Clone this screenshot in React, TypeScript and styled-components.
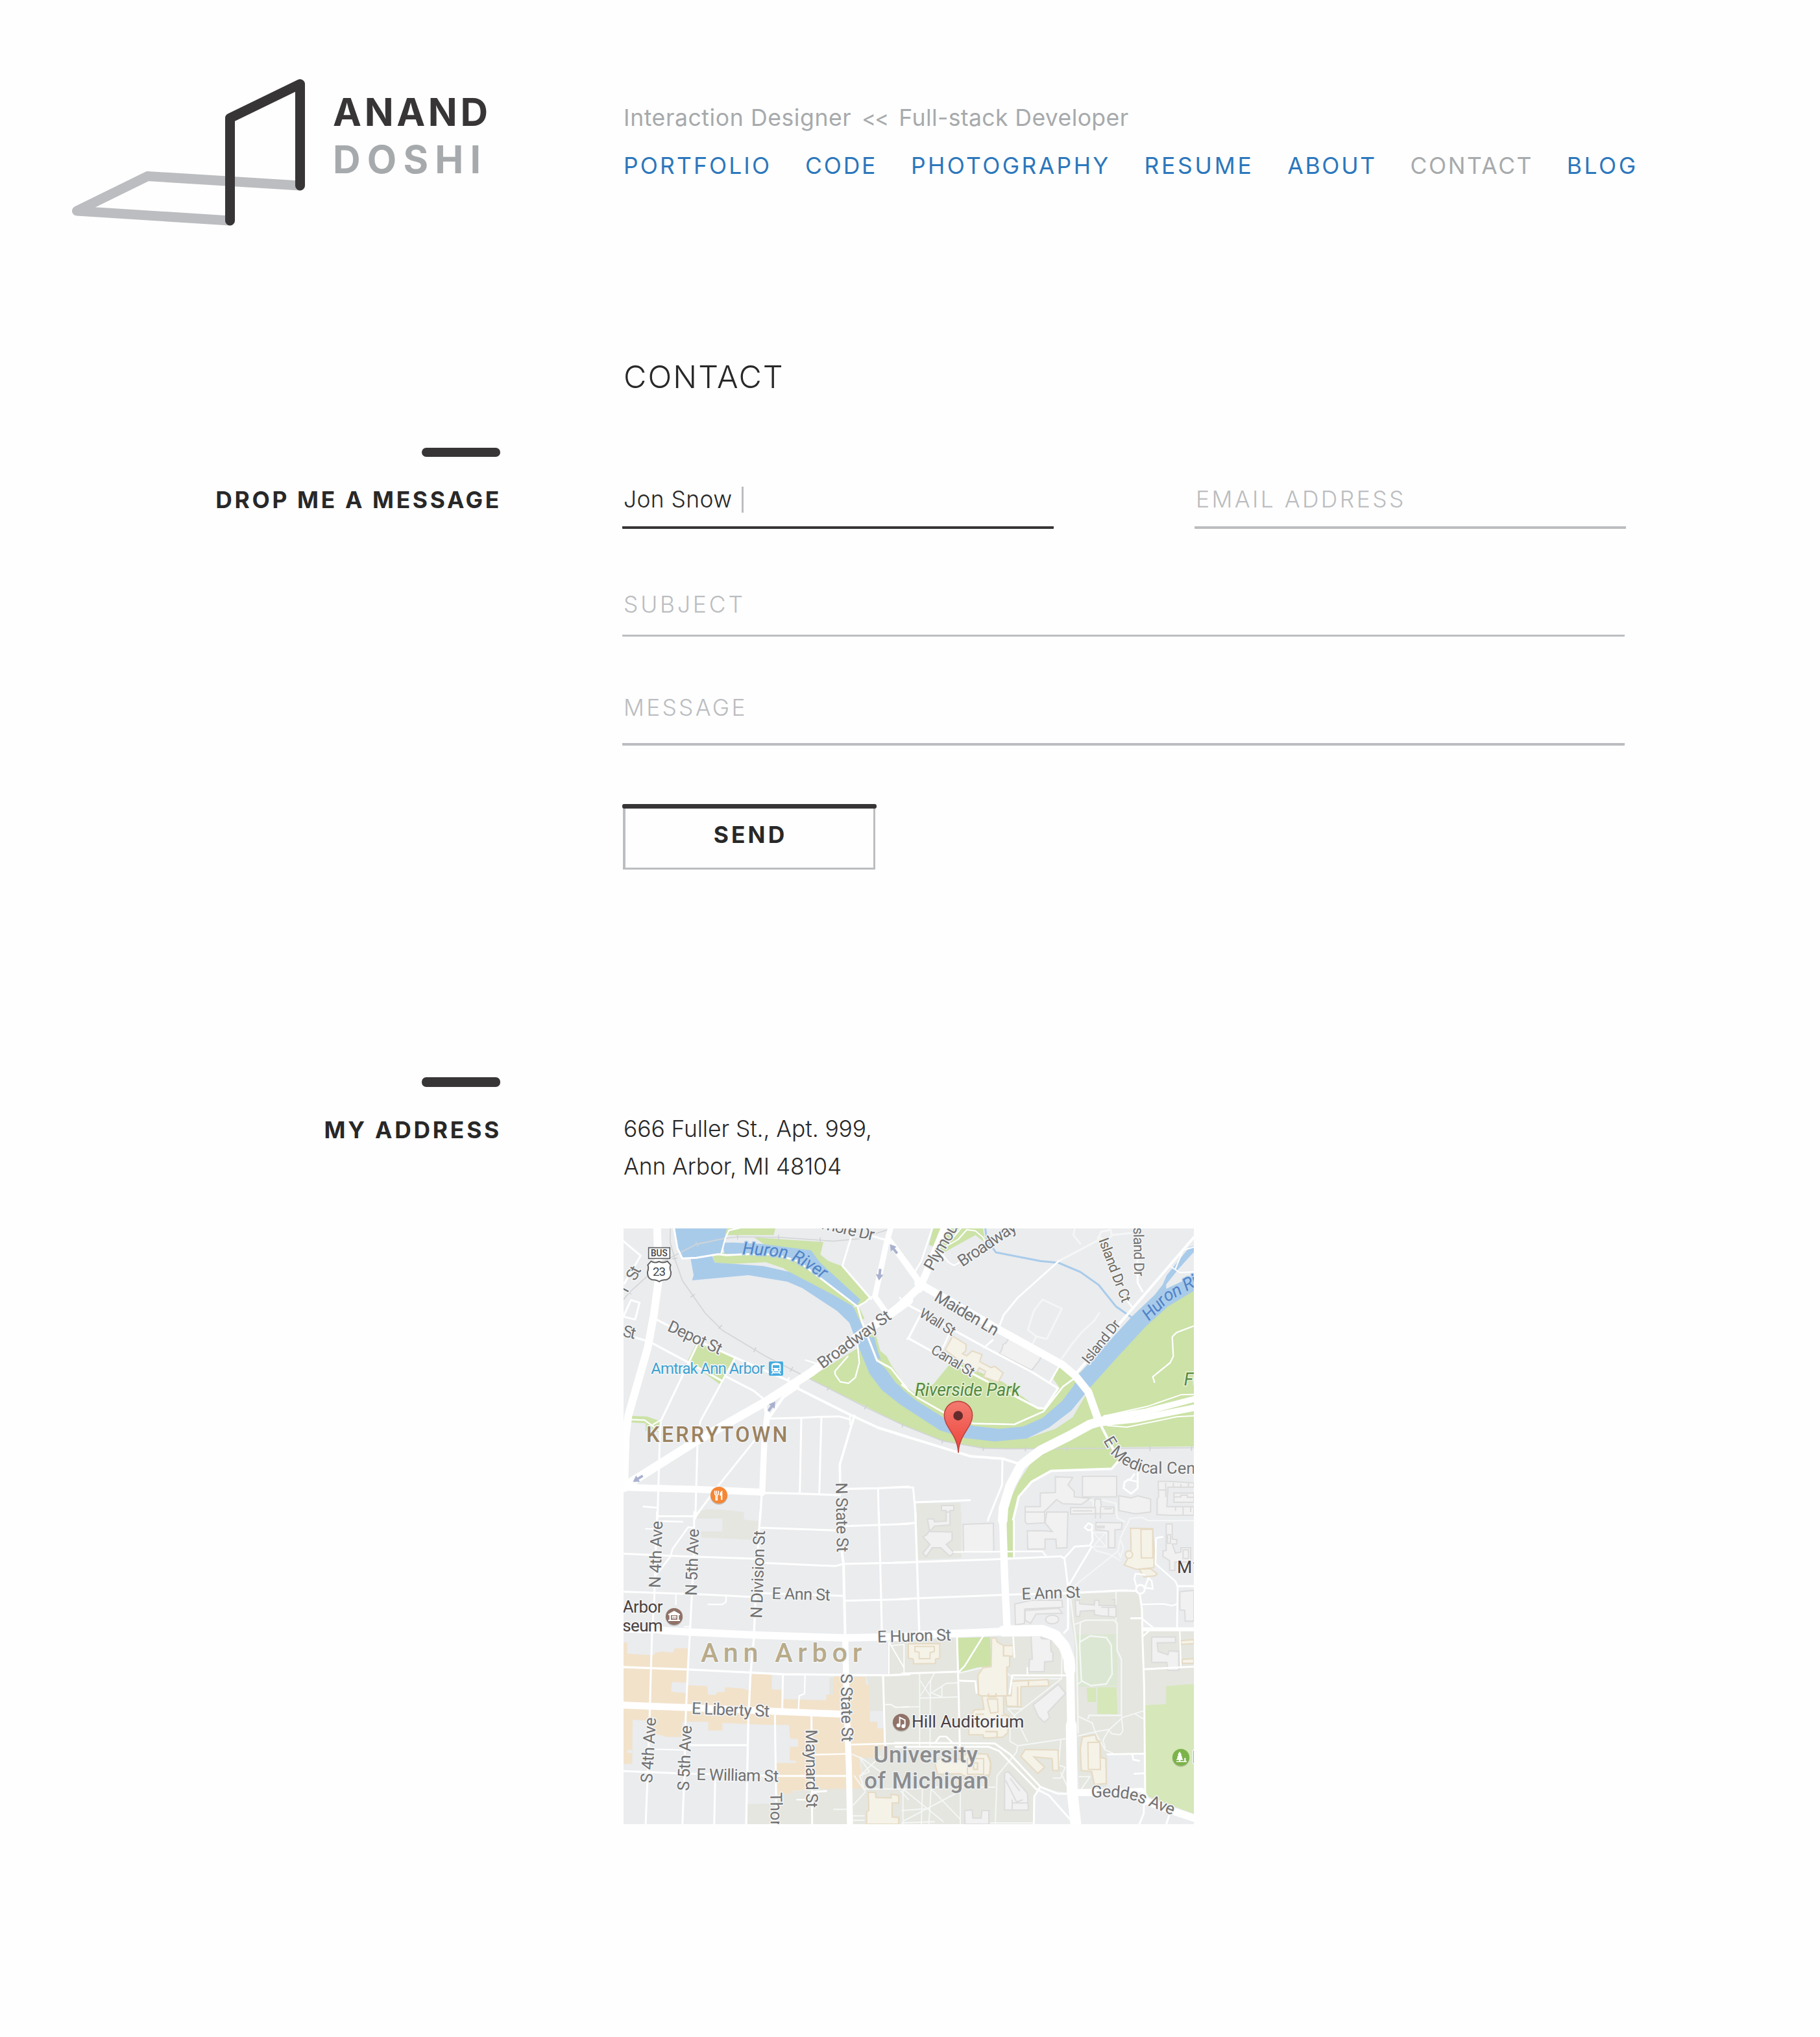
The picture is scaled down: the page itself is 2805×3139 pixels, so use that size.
import React from "react";
import styled, { createGlobalStyle } from "styled-components";

const ink = "#282828";
const dark = "#383536";
const rule = "#bbbdc0";
const muted = "#a7aaac";
const link = "#2c77bc";

const GlobalStyle = createGlobalStyle`
  html, body { margin: 0; padding: 0; background: #fefefe; }
  * { box-sizing: border-box; }
`;

const Page = styled.div`
  min-height: 3139px;
  padding-top: 100px;
  background: #fefefe;
  color: ${ink};
  font-family: Inter, "Open Sans", sans-serif;
  font-size: 35.4px;
  line-height: 40px;
  white-space: nowrap;
`;

const Columns = styled.div`
  display: grid;
  grid-template-columns: 771px 1fr;
  column-gap: 190px;
`;

const Header = styled.header`
  display: grid;
  grid-template-columns: 961px 1fr;
  height: 260px;
`;

const Brand = styled.div`
  display: flex;
  gap: 28px;
  padding-left: 100px;
`;

const LogoMark = styled.svg`
  display: block;
  width: 385px;
  height: 260px;
`;

const BrandName = styled.div`
  display: flex;
  flex-direction: column;
  padding-top: 36px;
  font-size: 59px;
  font-weight: 650;
  line-height: 73px;
`;

const NamePart = styled.span<{ $color: string; $track: number }>`
  color: ${(p) => p.$color};
  letter-spacing: ${(p) => p.$track}px;
`;

const HeaderText = styled.div`
  padding-top: 45px;
  line-height: 74px;
`;

const Tagline = styled.div`
  display: flex;
  gap: 16px;
  color: ${muted};
  font-size: 35.6px;
`;

const Role = styled.span<{ $track: number }>`
  letter-spacing: ${(p) => p.$track}px;
`;

const Chevrons = styled.span`
  width: 41px;
  font-size: 33px;
  letter-spacing: -2px;
`;

const Nav = styled.nav`
  display: flex;
  gap: 51.7px;
`;

const NavLink = styled.a<{ $track: number; $current?: boolean }>`
  color: ${(p) => (p.$current ? muted : link)};
  letter-spacing: ${(p) => p.$track}px;
  text-decoration: none;
`;

const Title = styled.h1`
  margin: 191px 0 79px 961px;
  font-size: 48.5px;
  font-weight: 350;
  line-height: 60px;
  letter-spacing: 2.1px;
`;

const Aside = styled.aside`
  display: flex;
  flex-direction: column;
  align-items: flex-end;
  gap: 47px;
`;

const Dash = styled.div<{ $height: number }>`
  width: 121px;
  height: ${(p) => p.$height}px;
  border-radius: 7px;
  background: ${dark};
`;

const AsideTitle = styled.h2<{ $track: number }>`
  margin: 0 -2px 0 0;
  font-size: 35.4px;
  font-weight: 700;
  letter-spacing: ${(p) => p.$track}px;
`;

const Form = styled.div`
  width: 1547px;
  margin-left: -2px;
  padding-top: 60px;
`;

const FieldRow = styled.div`
  display: grid;
  grid-template-columns: 665px 665px;
  column-gap: 217px;
`;

const Field = styled.label<{ $top?: number; $bottom: number; $line: number; $active?: boolean; $track: number }>`
  display: flex;
  align-items: center;
  width: ${(p) => (p.$top ? 1545 : 665)}px;
  margin-top: ${(p) => p.$top ?? 0}px;
  padding: 0 0 ${(p) => p.$bottom}px 2px;
  border-bottom: ${(p) => p.$line}px solid ${(p) => (p.$active ? dark : rule)};
  border-radius: 1px;
  color: ${(p) => (p.$active ? ink : rule)};
  font-weight: 350;
  letter-spacing: ${(p) => p.$track}px;
`;

const Caret = styled.span`
  width: 3px;
  height: 40px;
  margin-left: 15px;
  background: ${rule};
`;

const SendButton = styled.button`
  position: relative;
  display: block;
  width: 389px;
  height: 101px;
  margin: 90px 0 0 1px;
  padding: 8px 0 10px 3px;
  border: solid ${rule};
  border-width: 0 3px 3px 4px;
  background: transparent;
  color: ${ink};
  font: 700 35.4px/40px Inter, sans-serif;
  letter-spacing: 4.12px;
  &::before {
    content: "";
    position: absolute;
    top: 0;
    left: -5px;
    right: -5px;
    height: 7px;
    border-radius: 3px;
    background: ${dark};
  }
`;

const AddressSection = styled(Columns)`
  margin-top: 320px;
`;

const Address = styled.address`
  padding-top: 51px;
  font-style: normal;
  font-weight: 350;
  line-height: 58px;
  letter-spacing: -0.1px;
`;

const MapFrame = styled.div`
  width: 879px;
  height: 918px;
  margin-top: 66px;
  overflow: hidden;
  background: #eaecee;
`;

const MapSvg = styled.svg`
  display: block;
  width: 100%;
  height: 100%;
  font-family: Roboto, sans-serif;
`;

const MapText = styled.text<{ $size: number; $color: string; $weight?: number; $italic?: boolean; $halo?: string }>`
  font-size: ${(p) => p.$size}px;
  fill: ${(p) => p.$color};
  font-weight: ${(p) => p.$weight ?? 400};
  font-style: ${(p) => (p.$italic ? "italic" : "normal")};
  stroke: ${(p) => p.$halo ?? "#f3f4f5"};
  stroke-width: 10px;
  stroke-linejoin: round;
  paint-order: stroke;
`;

/* ---------- map data: four tiles, each with its own origin ---------- */

type Tile = "nw" | "ne" | "sw" | "se";
const origin: Record<Tile, string> = {
  nw: "translate(-63 -39)",
  ne: "translate(1287 -39)",
  sw: "translate(-63 1311)",
  se: "translate(1287 1311)",
};
const tiles: Tile[] = ["nw", "ne", "sw", "se"];

const water = "#a9cbea";
const park = "#cce2a7";
const campus = "#e4e6df";
const shops = "#f2e2ca";

type Area = [string, string];
const areas: Record<Tile, Area[]> = {
  nw: [
    [park, "540,39 765,39 757,70 535,70"],
    [park, "667,80 987,102 973,160 1010,190 1070,212 1208,362 1150,402 1100,390"],
    [park, "472,160 530,150 760,150 880,185 1150,390 1110,402 1080,390 940,310 870,268 800,222 720,195 560,203 485,197"],
    [park, "1125,405 1150,400 1177,455 1165,462 1190,530 1225,515 1250,605 1280,630 1300,670 1380,785 1380,960 1355,948 1180,860 1010,778 918,732 1150,590"],
    [park, "400,568 580,635 515,765 360,650"],
    [park, "88,905 170,908 235,930 225,980 165,975 165,940 85,935"],
    [water, "298,39 540,39 530,95 510,158 335,180 322,160 305,110"],
    [water, "520,105 570,104 700,110 930,140 970,195 1158,368 1140,400 1115,380 870,185 760,156 530,156"],
    [water, "373,178 472,165 485,197 600,205 710,213 830,240 1040,350 1125,400 1172,500 1205,540 1220,590 1235,650 1275,688 1320,750 1382,806 1382,884 1258,787 1200,710 1155,600 1128,530 1107,475 1050,420 890,315 820,285 640,255 380,279 387,255"],
    [water, "1205,545 1222,540 1240,610 1253,645 1235,640"],
    [campus, "420,1345 450,1337 530,1340 618,1350 618,1380 400,1380"],
  ],
  ne: [
    [park, "0,755 60,800 145,760 235,650 470,750 630,870 660,872 725,770 700,735 725,675 800,720 830,700 1065,460 1350,325 1350,1047 1000,1050 1000,1110 970,1150 690,1160 600,1210 540,1290 515,1380 480,1380 480,1335 540,1210 640,1057 376,1057 190,1022 0,948"],
    [park, "145,39 125,115 165,130 185,155 340,70 385,105 375,39"],
    ["#eaecee", "235,650 470,750 630,870 655,865 720,775 400,590 250,500"],
    ["#e6eaea", "578,1010 710,965 790,912 870,775 780,880 650,960"],
    [water, "0,780 60,830 190,912 330,952 450,965 560,955 650,915 740,838 795,765 820,710 1065,445 1170,345 1205,300 1225,255 1330,125 1350,120 1350,148 1280,225 1222,298 1222,318 1350,258 1350,328 1230,400 1130,490 1000,630 870,775 785,880 680,960 578,1010 430,1024 290,1008 175,972 0,858"],
    [campus, "68,1310 272,1308 272,1380 68,1380"],
  ],
  sw: [
    [campus, "400,0 620,0 620,35 690,42 690,130 425,118 420,90 520,90 520,25 400,15"],
    [campus, "1285,600 1380,590 1380,1443 635,1443 635,1350 775,1348 775,1300 950,1280 1175,1270 1160,1135 1225,1130 1265,1080 1205,970 1195,797 1185,760 1290,758"],
    [campus, "1015,765 1035,765 1035,843 1015,845"],
    [shops, "63,603 80,603 80,655 200,662 210,650 240,645 290,650 300,630 360,630 360,728 63,717"],
    [shops, "63,718 190,722 360,730 355,800 450,805 455,845 490,845 495,832 530,832 532,810 610,815 645,825 650,750 748,750 748,820 792,822 800,865 1000,870 1000,845 1035,843 1035,760 1183,762 1185,797 1198,797 1203,970 1237,970 1237,1000 1268,1002 1265,1080 1225,1135 1155,1138 1170,1278 950,1280 840,1290 835,1303 775,1305 770,1160 860,1160 860,1150 830,1148 833,1085 870,1085 870,1050 833,1048 828,985 700,983 520,975 520,1010 455,1010 455,970 335,970 330,1040 260,1040 230,1030 190,1025 190,965 105,960 103,1165 63,1165"],
    ["#eaecee", "287,785 355,790 355,838 283,830"],
    ["#eaecee", "1203,920 1265,920 1265,1000 1237,1000 1237,970 1203,970"],
    ["#eaecee", "82,1100 103,1100 101,1116 78,1112"],
  ],
  se: [
    [campus, "0,590 250,580 560,575 700,580 750,650 770,780 770,1300 640,1275 612,1310 610,1443 0,1443"],
    [campus, "68,0 275,0 275,213 72,220"],
    [campus, "780,380 1080,370 1105,400 1112,535 1350,550 1350,795 1225,805 1225,888 1125,893 1125,1115 950,1120 950,1270 820,1280 790,760 800,600 780,500"],
    ["#eaecee", "1110,400 1270,430 1275,540 1112,535"],
    ["#d6e7b9", "1125,893 1222,888 1222,805 1350,795 1350,1395 1240,1355 1125,1310"],
    [park, "478,0 520,0 515,210 487,208"],
    [park, "257,583 408,578 412,712 350,718 265,740"],
    ["#d6e7b9", "855,812 898,812 898,878 858,878"],
    ["#d6e7b9", "905,810 992,810 997,935 903,933"],
    ["#dbe7d2", "807,567 995,565 997,805 815,808"],
  ],
};

/* buildings: "g" plain, "c" campus cream */
const buildings: Record<Tile, Area[]> = {
  nw: [],
  ne: [
    ["c", "235,537 297,575 295,605 280,618 300,628 325,605 370,622 360,655 410,682 430,677 468,707 445,750 378,725 388,700 358,683 345,705 270,655 200,600"],
    ["g", "497,543 647,625 635,650 600,695 450,618 462,600 468,575 480,570"],
    ["g", "710,1187 790,1190 768,1225 797,1255 797,1280 870,1287 830,1315 745,1312 715,1293 625,1380 570,1380 570,1325 640,1325 640,1262 710,1260"],
    ["g", "835,1185 993,1185 993,1280 835,1280"],
    ["g", "1003,1275 1060,1285 1090,1275 1150,1290 1150,1350 1080,1358 1003,1343"],
    ["g", "1185,1208 1235,1208 1350,1215 1350,1235 1230,1235 1225,1325 1350,1325 1350,1365 1240,1365 1180,1362 1180,1290 1187,1280"],
    ["g", "780,1330 890,1330 893,1290 918,1290 922,1325 980,1328 980,1357 780,1360"],
    ["g", "183,1320 240,1320 240,1343 222,1343 222,1380 205,1380 205,1343 183,1343"],
    ["g", "1258,1262 1350,1262 1350,1305 1258,1305"],
  ],
  sw: [
    ["c", "1195,1295 1228,1297 1230,1320 1300,1322 1300,1305 1335,1310 1335,1345 1305,1345 1305,1410 1335,1412 1335,1443 1187,1443 1187,1385 1197,1380"],
  ],
  se: [
    ["g", "118,32 148,32 150,45 205,42 205,0 222,0 222,60 150,65 130,90 232,92 232,130 205,150 240,187 222,205 180,165 140,165 112,207 97,190 130,150 97,115 115,105 128,85"],
    ["g", "283,57 423,52 425,182 285,187"],
    ["g", "570,0 660,0 660,50 580,55 570,45"],
    ["g", "580,87 660,87 695,90 662,50 670,0 768,0 763,165 715,167 712,125 662,125 662,170 582,172"],
    ["g", "897,48 1018,50 1015,80 985,82 985,165 955,165 955,88 897,82"],
    ["c", "1057,75 1160,77 1160,95 1167,180 1165,257 1085,265 1028,245 1045,213 1035,195 1060,175"],
    ["c", "1105,80 1160,80 1160,212 1107,212"],
    ["c", "1097,265 1150,262 1180,285 1170,295 1120,300"],
    ["g", "1222,55 1250,55 1250,125 1272,128 1270,148 1250,148 1265,190 1290,185 1290,165 1335,165 1335,230 1262,232 1262,270 1238,270 1238,225 1207,205 1207,180 1222,178"],
    ["g", "522,425 600,408 740,408 743,440 568,448 567,515 525,522"],
    ["g", "570,455 725,445 742,468 620,472 595,515 570,500"],
    ["g", "802,408 820,408 822,425 890,430 892,408 910,408 912,432 990,432 990,485 920,480 910,478 890,475 890,455 825,458 822,482 805,482"],
    ["g", "1285,368 1350,362 1350,505 1310,505 1308,455 1285,452"],
    ["g", "1155,578 1265,578 1265,603 1180,605 1185,645 1230,660 1235,642 1280,645 1280,732 1230,732 1225,695 1155,695"],
    ["g", "597,572 643,572 645,585 687,588 690,645 698,650 698,690 660,692 658,738 587,738 590,682 603,680"],
    ["g", "723,797 757,838 675,925 683,950 658,972 630,945 607,892"],
    ["g", "475,1205 492,1200 580,1300 585,1378 475,1378"],
    ["g", "290,1380 325,1378 328,1415 367,1415 370,1380 402,1380 402,1443 292,1443"],
    ["c", "30,610 175,608 175,675 155,680 155,700 55,702 52,680 30,675"],
    ["c", "60,622 150,622 150,645 130,650 130,678 80,678 80,648 60,645"],
    ["c", "415,583 435,583 440,600 470,618 515,618 515,665 498,668 498,713 485,718 487,850 470,850 470,930 493,945 490,1020 467,1040 380,1045 375,1030 310,1030 310,960 335,915 380,912 370,850 355,845 352,755 375,720 413,715"],
    ["c", "395,865 442,865 445,925 410,930 400,890"],
    ["c", "480,850 505,850 508,783 675,775 680,803 550,808 550,900 485,897"],
    ["c", "550,1130 570,1098 722,1100 725,1195 698,1195 695,1140 610,1132 660,1180 628,1208"],
    ["c", "835,1040 895,1030 900,1055 915,1060 920,1135 943,1140 945,1255 890,1260 878,1200 830,1195 825,1095"],
    ["c", "860,1065 915,1065 918,1190 862,1190"],
    ["c", "150,1150 200,1130 270,1145 300,1115 395,1120 410,1160 405,1215 300,1225 270,1210 165,1212"],
    ["c", "303,1140 378,1140 378,1212 303,1212"],
    ["c", "1290,595 1350,590 1350,608 1290,612"],
    ["c", "1295,682 1350,678 1350,698 1297,700"],
  ],
};

type Road = [number, string];
const roads: Record<Tile, Road[]> = {
  nw: [
    [36, "218,30 226,270 203,440 175,590 85,905 73,1000 66,1240"],
    [40, "40,1248 400,1022 720,840 930,705 1170,520 1260,460 1382,372"],
    [32, "60,1236 400,1245 702,1258"],
    [28, "704,1262 715,1000 728,900"],
    [16, "728,915 712,830"], [14, "735,915 800,820 870,772"],
    [26, "1300,30 1278,110 1225,355 1290,445"], [24, "1290,90 1390,225"], [10, "1215,75 1295,98"],
    [10, "193,565 63,528"], [10, "193,568 440,700 520,745"], [10, "540,725 665,790 720,835"],
    [10, "215,460 400,555 560,628 830,745"], [12, "860,775 1110,900 1240,960 1382,1005"],
    [9, "405,575 235,930 230,1030 220,1380"], [9, "580,635 418,930 405,1030 395,1380"],
    [9, "63,98 142,165 63,300"], [9, "63,445 97,370 137,382 117,460 63,447"],
    [7, "85,922 160,925 230,975"], [7, "200,945 235,925"],
    [9, "740,918 890,914 975,910 1060,908 1112,922"], [9, "885,915 878,1265"], [9, "978,912 968,1268"],
    [11, "1130,905 1063,1130 1065,1260"], [7, "1110,900 1110,945"],
    [10, "715,1262 870,1265 1065,1272"], [10, "1090,1243 1240,1240 1382,1233"], [9, "1240,1240 1243,1380"],
    [10, "702,1262 695,1380"], [8, "155,1325 220,1330"], [8, "225,1370 390,1370"],
    [9, "395,1375 410,1350 500,1230 660,1030 735,920"],
    [9, "295,30 312,130 335,178 400,175 500,158 540,163 620,158 760,158 870,190 1145,400 1165,470 1235,650 1300,685 1382,790"],
    [7, "515,155 535,80 550,48 600,37"],
    [8, "1145,400 1180,380 1208,355"], [9, "1208,365 1075,212 1115,80"],
    [7, "1100,630 1040,700 1042,715 1065,748 1103,755 1135,728 1153,660 1145,575"],
    [7, "905,648 950,662"], [7, "1340,358 1352,375"], [7, "820,745 828,730"], [9, "1382,545 1375,550"],
  ],
  ne: [
    [36, "-60,440 0,388 80,312"], [34, "80,320 115,240 200,30"], [30, "-40,120 0,175 90,300"],
    [36, "75,292 180,352 440,502 740,668 800,718 862,795 910,930"],
    [12, "920,950 990,1085"],
    [44, "920,930 870,945 770,1000 640,1065 550,1135 500,1230 470,1330 466,1390"],
    [28, "1350,828 1130,885 940,915"], [30, "1350,868 1080,922 920,938"],
    [10, "0,378 70,415 390,592 600,702 722,778"], [10, "85,440 30,547 130,602 300,697 630,870 660,872 722,778"],
    [8, "220,525 185,600"], [9, "380,590 420,555"], [9, "440,520 470,440 535,360 725,190"],
    [8, "685,748 725,680"],
    [8, "0,762 70,820 190,888 330,941 520,945 655,885 745,770 800,730"],
    [12, "805,710 1010,475 1350,80"], [9, "1112,330 1090,290 1088,30"], [8, "1062,400 1040,370"],
    [6, "1235,210 1285,243 1350,240"], [6, "1350,125 1300,140 1265,225"],
    [7, "1350,490 1270,520 1250,540 1255,630 1240,660 1160,725 1168,750"],
    [8, "60,240 90,190 140,39"], [7, "180,150 215,195 240,210 330,165"], [6, "190,130 260,90 300,45 340,50 375,80 385,105"],
    [6, "230,90 280,30"],
    [12, "-30,985 0,995 320,1093 465,1103 550,1130"], [9, "465,1103 463,1225 400,1380"],
    [9, "0,1235 52,1237 65,1380"], [9, "65,1305 315,1295"],
    [11, "515,1385 540,1280 600,1210 690,1160 970,1150 1000,1115"],
    [9, "1075,1175 1060,1195 1030,1210 1025,1240 1060,1265 1090,1240 1090,1170"], [8, "1045,1200 1090,1210"],
    [6, "950,950 1040,958 1270,910 1350,905"], [6, "940,905 1140,860 1290,808 1350,806"],
  ],
  sw: [
    [34, "240,548 370,555 700,570 1090,582 1385,575"], [24, "63,545 240,550"],
    [28, "1088,582 1095,900 1105,1180 1110,1450"], [12, "1068,150 1080,240 1088,580"],
    [32, "63,893 380,905 1080,935"],
    [9, "218,0 205,400 195,560 190,720 185,900 175,1200 165,1450"],
    [9, "390,0 388,200 370,560 360,730 350,960 345,1200 335,1450"],
    [10, "695,0 680,250 665,590 650,750 640,960 630,1450"],
    [9, "63,193 340,205 700,217"], [9, "700,235 1040,250 1080,240 1385,233"], [9, "700,73 1040,85"], [9, "1085,65 1385,55"],
    [9, "63,368 450,382 650,392"], [9, "700,375 1085,388"], [9, "1088,410 1385,403"],
    [10, "63,717 360,728 650,742 800,750 1290,755 1385,750"], [9, "1243,0 1250,240 1258,570"], [9, "1263,755 1272,1080"],
    [9, "63,1198 330,1208 780,1220 1110,1220"], [9, "370,1078 635,1078"], [6, "205,1097 345,1100"],
    [9, "487,1230 482,1450"], [9, "763,940 770,1450"], [9, "800,750 797,905"],
    [7, "902,755 900,840 875,850 872,910"], [9, "932,940 935,1450"], [7, "940,1122 1100,1118"],
    [8, "1120,1075 1385,1068"], [8, "225,20 390,20"], [8, "225,42 335,45"], [6, "165,78 215,78"],
    [8, "385,72 362,70 290,170 280,205 215,290"], [10, "390,15 412,0"],
    [6, "305,380 305,428"], [7, "455,427 520,427 537,415 537,385"], [9, "935,1295 1000,1290"], [7, "865,1330 905,1330"],
    [6, "345,530 370,530"], [6, "1290,600 1290,750"], [6, "1290,600 1360,720"], [5, "1300,618 1360,612 1360,750"],
    [5, "1275,890 1300,890 1320,903 1380,900"],
  ],
  se: [
    [9, "-30,233 0,233 400,220 735,205 752,215 768,345 768,540 750,558"],
    [7, "240,185 650,182 668,205"], [9, "752,212 800,160 870,155 882,130 878,80"],
    [9, "768,345 878,160"], [9, "-10,402 500,382 770,375 1020,362 1085,365"],
    [8, "845,72 862,52 880,60 880,80 862,85 845,72"],
    [8, "1085,345 1075,310 1080,285 1120,290"], [8, "1125,345 1140,305 1155,320 1160,355 1125,350"],
    [9, "1100,380 1110,450 1113,600 1120,800 1125,1310"],
    [8, "1205,115 1175,120 1173,240 1265,320 1275,345 1272,540"], [9, "1275,343 1350,343"],
    [7, "1112,427 1210,425 1250,433 1275,425"], [9, "1060,491 1112,491"], [8, "1112,495 1160,533 1112,577"],
    [18, "1115,542 1350,542"], [9, "1120,727 1350,715"], [7, "1285,550 1290,715"],
    [10, "62,0 70,230 80,550"], [9, "0,55 65,50"],
    [8, "412,0 397,40"], [9, "518,40 518,205"],
    [34, "465,-10 475,300 487,550"],
    [36, "-40,580 100,568 480,552"],
    [52, "470,550 650,548 710,572 750,620 773,680 776,730"],
    [38, "778,720 783,1000"], [50, "783,985 787,1290 805,1450"],
    [9, "255,580 262,830 268,1080"], [9, "0,747 262,738"], [8, "265,738 290,712 375,575"],
    [9, "265,780 340,782 345,835"], [8, "515,580 520,670"], [9, "498,840 510,755 760,755"], [7, "580,720 580,755"],
    [9, "-30,1067 430,1070 500,1120 640,1270 720,1302 790,1302"],
    [9, "-30,1085 400,1085 450,1105 620,1280 680,1310 790,1435"],
    [8, "155,1065 175,1038 205,1038 232,1065"],
    [32, "800,1297 960,1297"], [20, "960,1292 1110,1285 1130,1320"], [34, "1110,1330 1240,1378 1350,1415"],
    [8, "950,1120 1125,1117"], [8, "1065,1120 1070,1145 1097,1150"], [8, "1075,1210 1120,1208"],
    [9, "610,1450 612,1315 640,1270"], [9, "1120,1310 1118,1395 1095,1450"], [9, "1240,1390 1220,1450"],
  ],
};

const paths: Record<Tile, Road[]> = {
  nw: [],
  ne: [
    [8, "740,640 785,575 835,515 890,465 912,430"],
    [8, "605,570 622,538 583,508 610,420 650,368 740,410 670,550 622,538"],
    [9, "725,190 905,95 920,55 965,45 970,70 1060,60"], [8, "825,110 793,70 800,35"], [8, "905,80 935,90 970,75"],
    [6, "860,1290 885,1300 885,1330"], [6, "930,1295 990,1310 995,1380"],
  ],
  sw: [
    [6, "1120,1120 1155,1135 1200,1200 1155,1220 1175,1280"], [6, "1155,1220 1250,1130"], [6, "1130,1220 1180,1290"],
    [6, "1160,1135 1250,1200"], [6, "1125,1355 1180,1295"], [6, "1175,1280 1380,1280"], [6, "1120,1405 1175,1405"],
    [6, "1120,1425 1175,1425"], [6, "1035,1375 1095,1375"], [6, "1345,1290 1380,1330"], [6, "1355,1280 1355,1443"],
  ],
  se: [
    [6, "800,340 1000,180 1010,120 1035,70 1055,30 1110,25 1140,40 1350,40"], [6, "880,160 900,180 960,195 1010,225"],
    [5, "880,95 945,95 945,160 885,160 945,90"], [5, "885,95 945,162"], [6, "1010,130 1025,165 1010,210 1003,190"], [6, "990,0 1000,30 1030,45"],
    [7, "825,600 870,573 945,580 968,615 972,750 945,795 875,803 830,780 822,620 825,510 850,500 980,500 995,515 995,640 1015,680 1015,940 865,940 860,955"],
    [7, "780,400 795,520 808,620 815,1020"], [6, "795,520 825,510"], [6, "815,795 835,780"], [6, "990,370 990,500"],
    [6, "815,1035 900,1015 960,1005 1020,950 1115,920"], [6, "815,945 880,975 895,1020 940,1100 975,1115"],
    [6, "955,1005 970,1025 1010,1030 1022,1010 1015,940"], [6, "955,1010 930,1055 940,1090"], [6, "1080,935 1115,955"],
    [6, "82,750 82,1080"], [6, "150,745 132,780 130,1080"], [6, "85,860 255,855"], [6, "135,838 205,792 255,790"], [6, "185,808 185,855 145,840"],
    [6, "0,902 80,900"], [5, "85,780 130,850"], [5, "130,780 85,850"],
    [6, "500,1060 535,1080 530,1110 440,1220 432,1443"], [6, "540,1080 760,1048"], [6, "735,1050 725,1170 755,1180 735,1230 700,1230"], [6, "735,1205 770,1280"],
    [6, "5,1280 190,1430"], [6, "270,1290 5,1430"], [6, "95,1280 90,1443"], [6, "270,1290 270,1443"], [6, "-20,1280 60,1280 150,1272 430,1272"],
    [6, "135,1280 125,1440"], [6, "140,1285 270,1420"], [6, "0,1437 150,1432"], [6, "0,1380 130,1370"], [6, "410,1437 610,1437"],
    [6, "740,650 738,770 520,940 500,1000 500,1060"], [6, "560,910 490,910 520,940 580,1060"], [6, "265,745 360,722 450,720 520,770 738,770"],
    [6, "820,1223 870,1223 830,1280"],
  ],
};

const rails: Record<Tile, string[]> = {
  nw: ["280,39 278,100 300,180 335,280 440,430 520,510 720,630 1010,778 1180,865 1355,948 1382,958", "63,368 90,335 250,190 400,112 530,85 590,78 780,80 970,93 1030,98 1150,87 1305,39"],
  ne: ["30,958 190,1022 376,1055 480,1058 1350,1053"],
  sw: [], se: [],
};
const ties: Record<Tile, [number, number, number][]> = {
  nw: [[300, 178, 80], [383, 350, 55], [510, 494, 45], [670, 600, 30], [840, 690, 28], [1010, 778, 28], [1182, 865, 28], [1355, 948, 22], [90, 335, -45], [402, 112, -25], [590, 78, 0], [780, 80, 0], [972, 93, 0]],
  ne: [[188, 1022, 15], [376, 1055, 0], [571, 1058, 0], [763, 1058, 0], [1147, 1056, 0], [1339, 1055, 0]],
  sw: [], se: [],
};
const streams: Record<Tile, string[]> = {
  nw: [], ne: ["385,30 392,90 435,150 640,190 725,198 825,240 910,300 990,400 1065,452"], sw: [], se: [],
};
const arrows: [Tile, number, number, number][] = [
  ["nw", 1312, 134, -38], ["nw", 1247, 252, 186], ["nw", 748, 862, 36], ["nw", 130, 1196, 238],
];

const street = "#717171";
const place = "#4a4040";
type Label = { t: Tile; s: string; x: number; y: number; w?: number; r?: number; size?: number; color?: string; weight?: number; italic?: boolean; halo?: string };
/* x, y is the start of the baseline; w the run length along it */
const labels: Label[] = [
  { t: "nw", s: "Depot St", x: 262, y: 510, w: 268, r: 25 },
  { t: "nw", s: "St", x: 117, y: 285, w: 62, r: -62 },
  { t: "nw", s: "r", x: 82, y: 338, r: -62 },
  { t: "nw", s: "St", x: 56, y: 538, w: 60, r: 12 },
  { t: "nw", s: "Broadway St", x: 983, y: 690, w: 400, r: -36 },
  { t: "nw", s: "more Dr", x: 975, y: 40, w: 248, r: 13 },
  { t: "nw", s: "Amtrak Ann Arbor", x: 190, y: 711, w: 526, size: 72, color: "#40a2d3" },
  { t: "nw", s: "KERRYTOWN", x: 168, y: 1026, w: 652, size: 97, color: "#9b825f", weight: 500 },
  { t: "nw", s: "N State St", x: 1044, y: 1214, w: 322, r: 89 },
  { t: "ne", s: "Plymou", x: 143, y: 239, w: 238, r: -60 },
  { t: "ne", s: "Broadway", x: 280, y: 218, w: 308, r: -34 },
  { t: "ne", s: "Maiden Ln", x: 145, y: 370, w: 330, r: 30.5 },
  { t: "ne", s: "Wall St", x: 76, y: 444, w: 182, r: 31, size: 66 },
  { t: "ne", s: "Canal St", x: 130, y: 613, w: 222, r: 31, size: 66 },
  { t: "ne", s: "Island Dr Ct", x: 909, y: 93, w: 312, r: 69.5, size: 66, color: "#726c5f" },
  { t: "ne", s: "Island Dr", x: 1070, y: 18, w: 242, r: 89, size: 66 },
  { t: "ne", s: "Island Dr", x: 863, y: 670, w: 240, r: -51, size: 66 },
  { t: "ne", s: "Riverside Park", x: 60, y: 813, w: 486, color: "#53893f", italic: true, size: 80, halo: "#e6f0d6" },
  { t: "ne", s: "Fu", x: 1304, y: 765, color: "#53893f", italic: true, size: 80, halo: "#e6f0d6" },
  { t: "sw", s: "N 4th Ave", x: 233, y: 352, w: 310, r: -88 },
  { t: "sw", s: "N 5th Ave", x: 401, y: 388, w: 310, r: -88 },
  { t: "sw", s: "N Division St", x: 703, y: 492, w: 406, r: -88 },
  { t: "sw", s: "E Ann St", x: 748, y: 402, w: 271, r: 1.5 },
  { t: "sw", s: "Arbor", x: 59, y: 465, w: 186, color: place, size: 78 },
  { t: "sw", s: "seum", x: 58, y: 551, w: 187, color: place, size: 78 },
  { t: "sw", s: "Ann Arbor", x: 420, y: 692, w: 745, size: 124, color: "#b8ab8a", weight: 500 },
  { t: "sw", s: "E Huron St", x: 1237, y: 603, w: 341, r: -1.5 },
  { t: "sw", s: "E Liberty St", x: 377, y: 933, w: 361, r: 2.2 },
  { t: "sw", s: "E William St", x: 400, y: 1239, w: 380, r: 1.2 },
  { t: "sw", s: "S 4th Ave", x: 195, y: 1254, w: 303, r: -86.5 },
  { t: "sw", s: "S 5th Ave", x: 365, y: 1290, w: 303, r: -87.5 },
  { t: "sw", s: "S State St", x: 1067, y: 748, w: 315, r: 89 },
  { t: "sw", s: "Maynard St", x: 905, y: 1006, w: 362, r: 89.5 },
  { t: "sw", s: "Thompson", x: 742, y: 1296, r: 89.5 },
  { t: "sw", s: "University", x: 1219, y: 1158, w: 482, size: 106, color: "#8b8c8e", weight: 500, halo: "#eceded" },
  { t: "sw", s: "of Michigan", x: 1176, y: 1278, w: 575, size: 106, color: "#8b8c8e", weight: 500, halo: "#eceded" },
  { t: "se", s: "E Ann St", x: 554, y: 405, w: 273, r: -2 },
  { t: "se", s: "Hill Auditorium", x: 45, y: 996, w: 520, size: 80, color: place },
  { t: "se", s: "M1", x: 1272, y: 283, size: 80, color: place },
  { t: "se", s: "N", x: 1342, y: 1160, size: 78, color: "#5d9440" },
];
const curved: { t: Tile; id: string; d: string; s: string; w: number; color: string; italic?: boolean; size: number; halo?: string }[] = [
  { t: "nw", id: "huronWest", d: "M612,158 Q740,163 815,178 Q880,198 1000,285", s: "Huron River", w: 398, color: "#4f83c7", italic: true, size: 80, halo: water },
  { t: "ne", id: "huronEast", d: "M1142,468 L1235,375 L1460,250", s: "Huron River", w: 390, color: "#4f83c7", italic: true, size: 80, halo: water },
  { t: "ne", id: "medical", d: "M930,1020 L968,1082 Q1040,1160 1150,1172 L1460,1174", s: "E Medical Center", w: 580, color: street, size: 76 },
  { t: "se", id: "geddes", d: "M876,1320 Q1000,1312 1080,1335 L1260,1405", s: "Geddes Ave", w: 388, color: street, size: 76 },
];

const Layer = ({ draw }: { draw: (t: Tile) => React.ReactNode }) => (
  <>
    {tiles.map((t) => (
      <g key={t} transform={origin[t]}>{draw(t)}</g>
    ))}
  </>
);

const Poi = ({ t, x, y, color, children }: { t: Tile; x: number; y: number; color: string; children: React.ReactNode }) => (
  <g transform={`${origin[t]} translate(${x} ${y})`}>
    <circle cy="4" r="40" fill="#000" opacity="0.18" />
    <circle r="39" fill={color} />
    {children}
  </g>
);

const AreaMap = () => (
  <MapSvg viewBox="0 0 2637 2754" fill="none" role="img" aria-label="Map of Ann Arbor">
    <defs>
      <linearGradient id="pin" x1="0" y1="0" x2="0" y2="1">
        <stop offset="0" stopColor="#f37a70" />
        <stop offset="1" stopColor="#ee4239" />
      </linearGradient>
    </defs>
    <rect width="2637" height="2754" fill="#eaecee" />
    <Layer draw={(t) => areas[t].map(([c, p], i) => <polygon key={i} points={p} fill={c} />)} />
    <Layer draw={(t) => streams[t].map((p, i) => <polyline key={i} points={p} stroke={water} strokeWidth="9" />)} />
    <Layer draw={(t) => paths[t].map(([w, p], i) => <polyline key={i} points={p} stroke="#f5f7f7" strokeWidth={w} strokeLinejoin="round" strokeLinecap="round" />)} />
    <Layer draw={(t) => rails[t].map((p, i) => <polyline key={i} points={p} stroke="#d3d5d6" strokeWidth="5" />)} />
    <Layer draw={(t) => ties[t].map(([x, y, r], i) => <path key={i} d="M0-12V12" stroke="#d0d2d3" strokeWidth="5" transform={`translate(${x} ${y}) rotate(${r})`} />)} />
    <Layer draw={(t) => buildings[t].map(([k, p], i) => <polygon key={i} points={p} fill={k === "g" ? "#f1f1f1" : "#f5f2e8"} stroke={k === "g" ? "#dcdcdc" : "#e6dac3"} strokeWidth="6" />)} />
    <g transform={origin.se}>
      <circle cx="1050" cy="197" r="17" fill="#f5f2e8" stroke="#e6dac3" strokeWidth="6" />
      <ellipse cx="695" cy="497" rx="30" ry="20" fill="#f1f1f1" stroke="#dcdcdc" strokeWidth="6" />
      <path d="M395,1120 Q425,1165 400,1225 M440,1040 V1015 H385 M372,850 H470 M400,838 V855 H435 V838 M470,618 V665 H498 M585,778 V803 M535,808 V900 M340,935 H380 M325,975 H370 M460,940 H495 M330,1160 H350 V1190 H332 Z" stroke="#e6dac3" strokeWidth="7" />
      <path d="M905,65 H935 V73 H905 Z M1228,105 H1242 V145 H1228 Z M1300,175 H1325 V215 H1300 Z M922,440 H990 M955,440 V482 M970,405 H985 V440 M480,1240 L530,1340 L560,1330 M510,1330 V1378 M510,1345 H585 M500,1230 L545,1290" stroke="#dcdcdc" strokeWidth="6" />
      <circle cx="1103" cy="357" r="20" fill="#eaecee" stroke="#fff" strokeWidth="9" />
    </g>
    <g transform={origin.ne}>
      <path d="M1260,1280 H1290 V1272 H1320 V1282 H1350 M1185,1248 H1225 M1220,1280 V1215 M1255,1215 V1235 M1290,1220 V1240 M1325,1215 V1235 M790,1345 H880 M895,1325 V1380 M918,1325 V1380 M935,1335 H970 M1265,1325 V1345 M1300,1325 V1365 M1335,1325 V1350" stroke="#dcdcdc" strokeWidth="6" />
    </g>
    <Layer draw={(t) => roads[t].map(([w, p], i) => <polyline key={i} points={p} stroke="#fff" strokeWidth={w} strokeLinejoin="round" strokeLinecap="round" />)} />
    {arrows.map(([t, x, y, r], i) => (
      <path key={i} transform={`${origin[t]} translate(${x} ${y}) rotate(${r})`} d="M0-28 L17 0 H6 V26 H-6 V0 H-17 Z" fill="#aab1cf" />
    ))}

    {labels.map((l, i) => (
      <MapText
        key={i}
        $size={l.size ?? 76}
        $color={l.color ?? street}
        $weight={l.weight}
        $italic={l.italic}
        $halo={l.halo}
        textLength={l.w}
        transform={`${origin[l.t]} translate(${l.x} ${l.y}) rotate(${l.r ?? 0})`}
      >
        {l.s}
      </MapText>
    ))}
    {curved.map((l) => (
      <g key={l.id} transform={origin[l.t]}>
        <path id={l.id} d={l.d} />
        <MapText $size={l.size} $color={l.color} $italic={l.italic} $halo={l.halo}>
          <textPath href={`#${l.id}`} textLength={l.w}>{l.s}</textPath>
        </MapText>
      </g>
    ))}

    <g transform={origin.nw}>
      <rect x="179" y="128" width="98" height="50" fill="#fff" stroke="#616161" strokeWidth="5" />
      <MapText $size={44} $color="#444" $weight={500} $halo="none" x="189" y="169" textLength="77" lengthAdjust="spacingAndGlyphs">BUS</MapText>
      <path d="M190 191 Q208 201 227 192 Q246 201 266 191 L281 208 Q274 220 282 240 Q284 268 262 276 Q240 276 228 285 Q214 276 194 276 Q172 268 174 240 Q181 220 175 208 Z" fill="#fff" stroke="#616161" strokeWidth="6" />
      <MapText $size={56} $color="#444" $halo="none" x="198" y="259" textLength="60">23</MapText>
      <rect x="735" y="654" width="66" height="66" rx="6" fill="#45abe0" />
      <path d="M747 700 V672 Q747 661 768 661 Q790 661 790 672 V700 Z" fill="#fff" />
      <rect x="753" y="671" width="31" height="13" fill="#45abe0" />
      <circle cx="756" cy="692" r="4" fill="#45abe0" />
      <circle cx="781" cy="692" r="4" fill="#45abe0" />
      <path d="M756 700 L748 713 M781 700 L789 713 M751 706 H786" stroke="#fff" strokeWidth="5" />
    </g>
    <Poi t="nw" x={504} y={1272} color="#f58634">
      <path d="M-19-20 V-8 Q-19-1 -14 0 V22 H-8 V0 Q-2-1 -2-8 V-20 M-11-20 V-4" stroke="#fff" strokeWidth="5" />
      <path d="M16-21 V22 H9 V2 H4 Q3-16 16-21Z" fill="#fff" />
    </Poi>
    <Poi t="sw" x={297} y={483} color="#8f7268">
      <path d="M0-26 L27-11 V-6 H-27 V-11 Z M-22-6 H-15 V16 H-22 Z M15-6 H22 V16 H15 Z M-27 15 H27 V21 H-27 Z M-10-3 H10 V10 H-10 Z" fill="#fff" />
      <path d="M-4 0 V7 M4 0 V7" stroke="#8f7268" strokeWidth="3" />
    </Poi>
    <Poi t="sw" x={1347} y={972} color="#8f7268">
      <path d="M-7 12 V-22 L17-10 V18" stroke="#fff" strokeWidth="6" />
      <circle cx="-13" cy="14" r="9" fill="#fff" />
      <circle cx="10" cy="18" r="9" fill="#fff" />
    </Poi>
    <Poi t="se" x={1290} y={1134} color="#7cb34b">
      <path d="M-6-27 L4-11 H0 L7 1 H4 L10 12 H-2 V17 H16 V3 H22 V17 H27 V22 H-21 V17 H-9 V12 H-22 L-14 1 H-18 L-11-11 H-15 Z" fill="#fff" />
    </Poi>
    <g transform={origin.ne}>
      <path d="M261 1076 C258 990 196 960 196 903 A65 65 0 0 1 326 903 C326 960 264 990 261 1076 Z" fill="url(#pin)" stroke="#bd4841" strokeWidth="5" />
      <circle cx="260" cy="905" r="22" fill="#632b2c" />
    </g>
  </MapSvg>
);

const Logo = () => (
  <LogoMark viewBox="100 100 385 260" fill="none" strokeWidth="15" strokeLinecap="round" strokeLinejoin="round" aria-label="Anand Doshi">
    <path d="M462 286 L227.500 271.500 L118.500 325 L354 340" stroke={rule} />
    <path d="M354.500 340 V182 L462.500 129.500 V286" stroke={dark} />
  </LogoMark>
);

const nav: { label: string; track: number; current?: boolean }[] = [
  { label: "PORTFOLIO", track: 3.16 },
  { label: "CODE", track: 2.88 },
  { label: "PHOTOGRAPHY", track: 3.42 },
  { label: "RESUME", track: 3.79 },
  { label: "ABOUT", track: 2.76 },
  { label: "CONTACT", track: 2.59, current: true },
  { label: "BLOG", track: 3.59 },
];

export default function App() {
  return (
    <Page>
      <GlobalStyle />
      <Header>
        <Brand>
          <Logo />
          <BrandName>
            <NamePart $color={dark} $track={4.6}>ANAND</NamePart>
            <NamePart $color={muted} $track={10.2}>DOSHI</NamePart>
          </BrandName>
        </Brand>
        <HeaderText>
          <Tagline>
            <Role $track={0.58}>Interaction Designer</Role>
            <Chevrons>&lt;&lt;</Chevrons>
            <Role $track={0.38}>Full-stack Developer</Role>
          </Tagline>
          <Nav>
            {nav.map((n) => (
              <NavLink key={n.label} $track={n.track} $current={n.current}>{n.label}</NavLink>
            ))}
          </Nav>
        </HeaderText>
      </Header>

      <Title>CONTACT</Title>

      <Columns>
        <Aside>
          <Dash $height={14} />
          <AsideTitle $track={3.67}>DROP ME A MESSAGE</AsideTitle>
        </Aside>
        <Form>
          <FieldRow>
            <Field $bottom={21} $line={4} $track={0.4} $active>Jon Snow<Caret /></Field>
            <Field $bottom={21} $line={4} $track={3.45}>EMAIL ADDRESS</Field>
          </FieldRow>
          <Field $top={97} $bottom={26} $line={3} $track={3.85}>SUBJECT</Field>
          <Field $top={90} $bottom={34} $line={4} $track={3.27}>MESSAGE</Field>
          <SendButton type="button">SEND</SendButton>
        </Form>
      </Columns>

      <AddressSection>
        <Aside>
          <Dash $height={15} />
          <AsideTitle $track={3.76}>MY ADDRESS</AsideTitle>
        </Aside>
        <div>
          <Address>
            666 Fuller St., Apt. 999,
            <br />
            Ann Arbor, MI 48104
          </Address>
          <MapFrame>
            <AreaMap />
          </MapFrame>
        </div>
      </AddressSection>
    </Page>
  );
}
